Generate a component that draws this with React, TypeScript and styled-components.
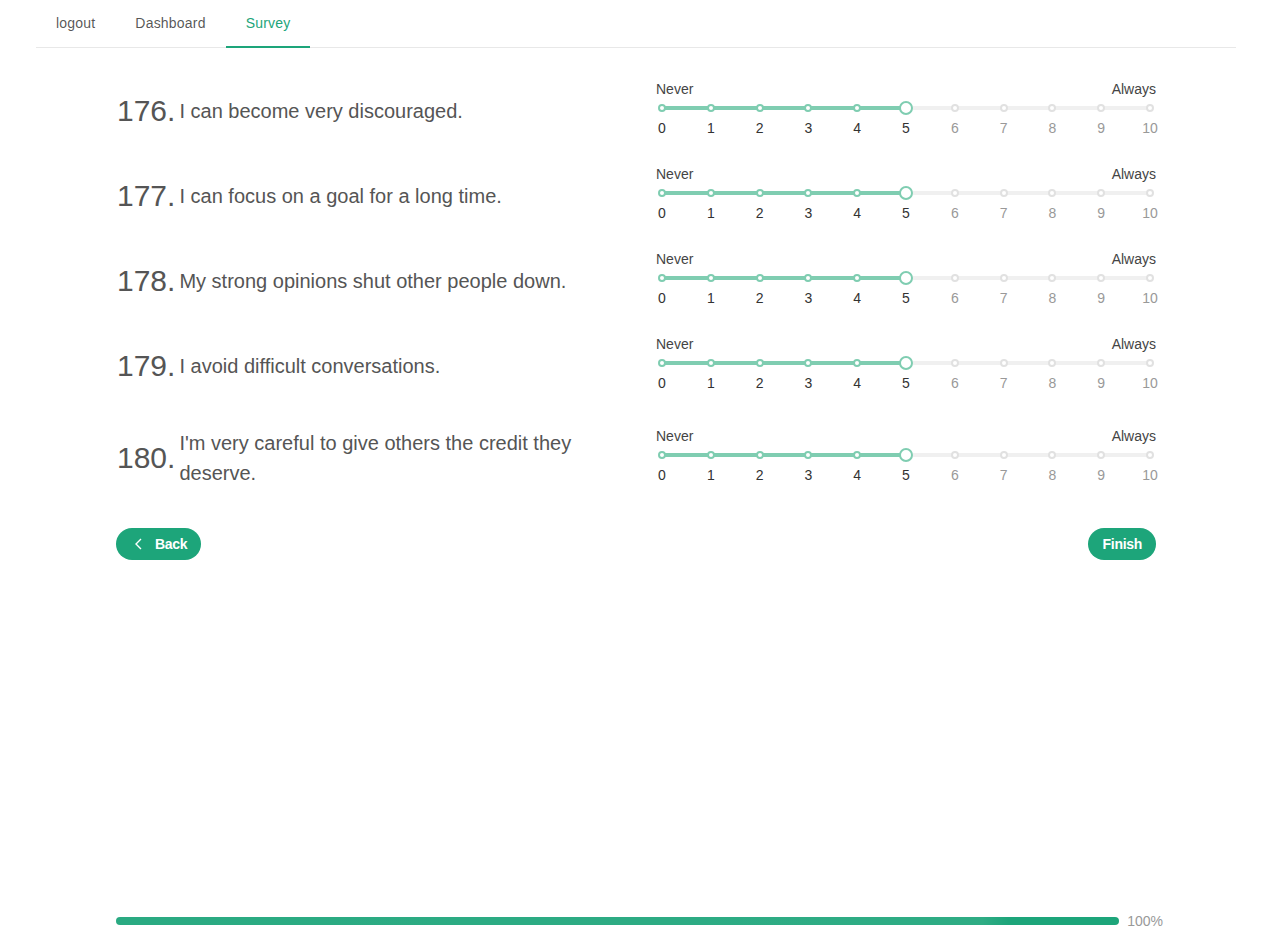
import React from "react";
import styled, { createGlobalStyle, css } from "styled-components";

const GREEN = "#1da57a";
const TRACK = "#7fcdb1";

const Global = createGlobalStyle`
  html, body { margin: 0; padding: 0; background: #fff; }
  body { font-family: "Liberation Sans", Arial, sans-serif; }
  #root { min-height: 100vh; }
  * { box-sizing: border-box; }
`;

const Page = styled.div`
  min-height: 100vh;
  display: flex;
  flex-direction: column;
`;

const Nav = styled.nav`
  margin-left: 36px;
  width: 1200px;
  height: 48px;
  display: flex;
  border-bottom: 1px solid #e8e8e8;
`;

const Tab = styled.div<{ $active?: boolean }>`
  position: relative;
  height: 47px;
  padding: 0 20px 2px 20px;
  display: flex;
  align-items: center;
  font-size: 14px;
  letter-spacing: 0.2px;
  color: ${(p) => (p.$active ? GREEN : "rgba(0,0,0,0.68)")};
  ${(p) =>
    p.$active &&
    css`
      &::after {
        content: "";
        position: absolute;
        left: 0;
        right: 0;
        bottom: -1px;
        height: 2px;
        background: ${GREEN};
      }
    `}
`;

const Content = styled.main`
  margin-left: 116px;
  width: 1040px;
  padding-top: 31px;
  display: flex;
  flex-direction: column;
`;

const Questions = styled.div`
  display: flex;
  flex-direction: column;
  gap: 25px;
`;

const Row = styled.div`
  display: flex;
  align-items: center;
  justify-content: space-between;
`;

const Question = styled.div`
  flex: 0 0 480px;
  display: flex;
  align-items: center;
  padding: 9px 0 5px 1px;
  color: #555;
`;

const Num = styled.span`
  font-size: 30px;
  line-height: 40px;
  margin-right: 4px;
  flex: none;
`;

const QText = styled.span`
  font-size: 20px;
  line-height: 30px;
`;

const SliderBox = styled.div`
  flex: 0 0 500px;
  display: flex;
  flex-direction: column;
`;

const Ends = styled.div`
  display: flex;
  justify-content: space-between;
  font-size: 14px;
  line-height: 20px;
  color: #444;
`;

const RailArea = styled.div`
  height: 18px;
  margin: 0 6px;
  position: relative;
`;

const Rail = styled.div`
  position: absolute;
  left: 0;
  right: 0;
  top: 7px;
  height: 4px;
  border-radius: 2px;
  background: #f0f0f0;
`;

const Track = styled.div`
  position: absolute;
  left: 0;
  top: 7px;
  height: 4px;
  border-radius: 2px;
  background: ${TRACK};
`;

const Dot = styled.span<{ $on: boolean }>`
  position: absolute;
  top: 5px;
  width: 8px;
  height: 8px;
  margin-left: -4px;
  border-radius: 50%;
  background: #fff;
  border: 2px solid ${(p) => (p.$on ? TRACK : "#e1e1e1")};
`;

const Handle = styled.span`
  position: absolute;
  top: 2px;
  width: 14px;
  height: 14px;
  margin-left: -7px;
  border-radius: 50%;
  background: #fff;
  border: 2px solid ${TRACK};
`;

const Marks = styled.div`
  height: 22px;
  margin: 0 6px;
  position: relative;
`;

const Mark = styled.span<{ $on: boolean }>`
  position: absolute;
  top: 0;
  transform: translateX(-50%);
  font-size: 14px;
  line-height: 22px;
  color: ${(p) => (p.$on ? "#333" : "#999")};
`;

const Buttons = styled.div`
  margin-top: 35px;
  display: flex;
  justify-content: space-between;
`;

const Button = styled.button`
  height: 32px;
  padding: 0 14px 0 15px;
  border: none;
  border-radius: 16px;
  background: ${GREEN};
  color: #fff;
  font-family: "Liberation Sans", Arial, sans-serif;
  font-weight: bold;
  font-size: 14px;
  letter-spacing: -0.3px;
  display: flex;
  align-items: center;
  gap: 11px;
  cursor: pointer;
`;

const BackIcon = styled.svg`
  margin-left: 3px;
  flex: none;
`;

const ProgressWrap = styled.div`
  margin-top: auto;
  margin-left: 116px;
  width: 1047px;
  height: 22px;
  margin-bottom: 16px;
  display: flex;
  align-items: center;
`;

const Bar = styled.div`
  flex: 1;
  height: 8px;
  border-radius: 4px;
  background: ${GREEN};
  position: relative;
  overflow: hidden;
  &::before {
    content: "";
    position: absolute;
    left: 0;
    top: 0;
    bottom: 0;
    width: 89%;
    background: linear-gradient(to right, rgba(255,255,255,0.06), rgba(255,255,255,0.08) 97%, rgba(255,255,255,0));
  }
`;

const Percent = styled.span`
  margin-left: 8px;
  font-size: 14px;
  color: #999;
  white-space: nowrap;
`;

const questions: [number, string][] = [
  [176, "I can become very discouraged."],
  [177, "I can focus on a goal for a long time."],
  [178, "My strong opinions shut other people down."],
  [179, "I avoid difficult conversations."],
  [180, "I'm very careful to give others the credit they deserve."],
];

function Slider({ value }: { value: number }) {
  const steps = Array.from({ length: 11 }, (_, i) => i);
  return (
    <SliderBox>
      <Ends>
        <span>Never</span>
        <span>Always</span>
      </Ends>
      <RailArea>
        <Rail />
        <Track style={{ width: `${value * 10}%` }} />
        {steps.map((i) =>
          i === value ? null : <Dot key={i} $on={i < value} style={{ left: `${i * 10}%` }} />
        )}
        <Handle style={{ left: `${value * 10}%` }} />
      </RailArea>
      <Marks>
        {steps.map((i) => (
          <Mark key={i} $on={i <= value} style={{ left: `${i * 10}%` }}>
            {i}
          </Mark>
        ))}
      </Marks>
    </SliderBox>
  );
}

export default function App() {
  return (
    <Page>
      <Global />
      <Nav>
        <Tab>logout</Tab>
        <Tab>Dashboard</Tab>
        <Tab $active>Survey</Tab>
      </Nav>
      <Content>
        <Questions>
          {questions.map(([n, t]) => (
            <Row key={n}>
              <Question>
                <Num>{n}.</Num>
                <QText>{t}</QText>
              </Question>
              <Slider value={5} />
            </Row>
          ))}
        </Questions>
        <Buttons>
          <Button>
            <BackIcon width="10" height="14" viewBox="0 0 10 14">
              <polyline points="7,2 2,7 7,12" fill="none" stroke="#fff" strokeWidth="1.4" />
            </BackIcon>
            <span>Back</span>
          </Button>
          <Button>Finish</Button>
        </Buttons>
      </Content>
      <ProgressWrap>
        <Bar />
        <Percent>100%</Percent>
      </ProgressWrap>
    </Page>
  );
}
